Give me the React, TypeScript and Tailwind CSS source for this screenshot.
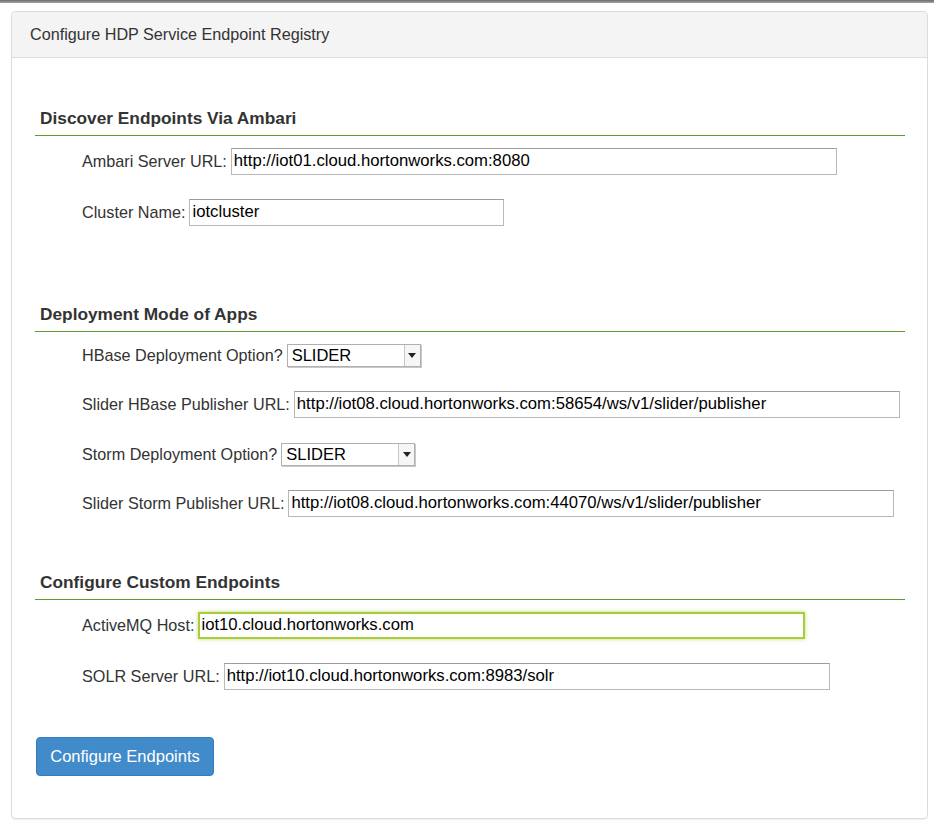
import React from "react";

function TextField({ value, width, focused }: { value: string; width: number; focused?: boolean }) {
  return (
    <div
      className={
        focused
          ? "h-[27px] flex items-center pl-[1px] border-2 border-[#a9cc3a] shadow-[0_0_4px_rgba(169,204,58,0.7)] bg-white"
          : "h-[27px] flex items-center pl-[2px] border border-[#b8b8b8] border-t-[#9c9c9c] bg-white"
      }
      style={{ width }}
    >
      <span className="text-[16.7px] text-black leading-none whitespace-nowrap">{value}</span>
    </div>
  );
}

function Select({ value }: { value: string }) {
  return (
    <div className="w-[134px] h-[23px] flex border border-[#b0b0b0] bg-white shadow-[1px_1px_0_#c8c8c8]">
      <div className="flex-1 flex items-center pl-[4px] text-[16.5px] leading-none text-black">{value}</div>
      <div className="w-[16px] flex items-center justify-center border-l border-[#c8c8c8] bg-[#f6f6f6]">
        <svg width="8" height="5" viewBox="0 0 8 5">
          <path d="M0 0 H8 L4 5 Z" fill="#222" />
        </svg>
      </div>
    </div>
  );
}

function Row({ label, children, className = "" }: { label: string; children: React.ReactNode; className?: string }) {
  return (
    <div className={"h-[27px] flex items-center pl-[47px] " + className}>
      <span className="text-[16.2px] text-[#333] mr-[4px] whitespace-nowrap">{label}</span>
      {children}
    </div>
  );
}

function SectionHeading({ children, className = "" }: { children: React.ReactNode; className?: string }) {
  return (
    <h3 className={"text-[17.3px] leading-[20px] font-bold text-[#333] pl-[5px] pb-[7px] border-b border-[#5f9a2a] " + className}>
      {children}
    </h3>
  );
}

export default function App() {
  return (
    <div className="w-[934px] h-[826px] bg-white font-['Liberation_Sans',Arial,sans-serif]">
      {/* top chrome edge */}
      <div className="h-[3px] bg-gradient-to-b from-[#6e6e6e] to-[#a4a4a4]" />

      <div className="mt-[8px] ml-[11px] w-[917px] h-[808px] border border-[#dcdcdc] rounded-[4px] shadow-[0_1px_1px_rgba(0,0,0,0.06)] flex flex-col">
        {/* header */}
        <div className="h-[46px] bg-[#f4f4f4] border-b border-[#dddddd] rounded-t-[4px] flex items-center pl-[18px]">
          <span className="text-[16.2px] text-[#333]">Configure HDP Service Endpoint Registry</span>
        </div>

        {/* body */}
        <div className="pl-[23px] pr-[22px] flex flex-col">
          <SectionHeading className="mt-[50px]">Discover Endpoints Via Ambari</SectionHeading>
          <Row label="Ambari Server URL:" className="mt-[12px]">
            <TextField value="http://iot01.cloud.hortonworks.com:8080" width={606} />
          </Row>
          <Row label="Cluster Name:" className="mt-[24px]">
            <TextField value="iotcluster" width={315} />
          </Row>

          <SectionHeading className="mt-[78px]">Deployment Mode of Apps</SectionHeading>
          <Row label="HBase Deployment Option?" className="mt-[10px]">
            <Select value="SLIDER" />
          </Row>
          <Row label="Slider HBase Publisher URL:" className="mt-[22px]">
            <TextField value="http://iot08.cloud.hortonworks.com:58654/ws/v1/slider/publisher" width={606} />
          </Row>
          <Row label="Storm Deployment Option?" className="mt-[23px]">
            <Select value="SLIDER" />
          </Row>
          <Row label="Slider Storm Publisher URL:" className="mt-[22px]">
            <TextField value="http://iot08.cloud.hortonworks.com:44070/ws/v1/slider/publisher" width={606} />
          </Row>

          <SectionHeading className="mt-[55px]">Configure Custom Endpoints</SectionHeading>
          <Row label="ActiveMQ Host:" className="mt-[12px]">
            <TextField value="iot10.cloud.hortonworks.com" width={607} focused />
          </Row>
          <Row label="SOLR Server URL:" className="mt-[24px]">
            <TextField value="http://iot10.cloud.hortonworks.com:8983/solr" width={606} />
          </Row>

          <div className="mt-[47px]">
            <button className="w-[178px] h-[39px] ml-[1px] bg-[#428bca] border border-[#357ebd] rounded-[4px] text-white text-[16.5px]">
              Configure Endpoints
            </button>
          </div>
        </div>
      </div>
    </div>
  );
}
